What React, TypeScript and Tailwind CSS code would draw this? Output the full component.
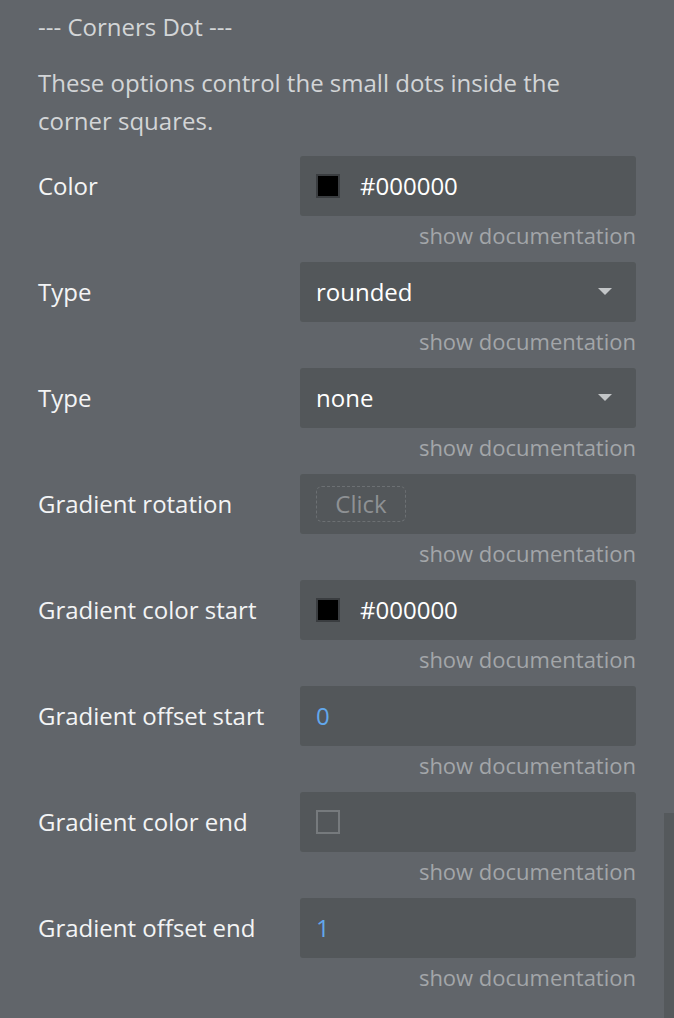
import React from "react";

type Field =
  | { kind: "color"; label: string; value: string }
  | { kind: "select"; label: string; value: string }
  | { kind: "click"; label: string }
  | { kind: "number"; label: string; value: string }
  | { kind: "empty-color"; label: string };

const fields: Field[] = [
  { kind: "color", label: "Color", value: "#000000" },
  { kind: "select", label: "Type", value: "rounded" },
  { kind: "select", label: "Type", value: "none" },
  { kind: "click", label: "Gradient rotation" },
  { kind: "color", label: "Gradient color start", value: "#000000" },
  { kind: "number", label: "Gradient offset start", value: "0" },
  { kind: "empty-color", label: "Gradient color end" },
  { kind: "number", label: "Gradient offset end", value: "1" },
];

function Control({ field }: { field: Field }) {
  switch (field.kind) {
    case "color":
      return (
        <div className="flex items-center h-full pl-4">
          <span className="w-6 h-6 bg-black border-2 border-[#3a3d40]" />
          <span className="ml-5 text-white">{field.value}</span>
        </div>
      );
    case "empty-color":
      return (
        <div className="flex items-center h-full pl-4">
          <span className="w-6 h-6 border-2 border-[#767a7d]" />
        </div>
      );
    case "select":
      return (
        <div className="flex items-center justify-between h-full pl-4 pr-[24px]">
          <span className="text-white">{field.value}</span>
          <svg width="14" height="8" viewBox="0 0 14 8">
            <path d="M0 0 L14 0 L7 7 Z" fill="#c3c6c8" />
          </svg>
        </div>
      );
    case "click":
      return (
        <div className="flex items-center h-full pl-4">
          <span className="flex items-center justify-center w-[90px] h-9 rounded-md border border-dashed border-[#6c7073] text-[#8e9194]">
            Click
          </span>
        </div>
      );
    case "number":
      return (
        <div className="flex items-center h-full pl-4">
          <span className="text-[#62a8ec]">{field.value}</span>
        </div>
      );
  }
}

export default function App() {
  return (
    <div
      className="relative w-[674px] h-[1018px] overflow-hidden bg-[#61656a] text-[24px]"
      style={{ fontFamily: '"Open Sans", sans-serif' }}
    >
      <div className="pl-[38px] pr-[38px] pt-[12px]">
        <div className="leading-[30px] text-[#d3d5d7]">--- Corners Dot ---</div>
        <p className="mt-[22px] leading-[38px] text-[#d3d5d7] w-[560px]">
          These options control the small dots inside the corner squares.
        </p>
        <div className="mt-[16px] flex flex-col">
          {fields.map((f, i) => (
            <div key={i} className="flex flex-col h-[106px]">
              <div className="flex h-[60px]">
                <div className="w-[262px] flex items-center text-[#f3f4f5]">{f.label}</div>
                <div className="w-[336px] h-[60px] rounded-[3px] bg-[#53575a]">
                  <Control field={f} />
                </div>
              </div>
              <div className="w-[598px] text-right text-[22px] leading-[38px] text-[#a3a6a9]">
                show documentation
              </div>
            </div>
          ))}
        </div>
      </div>
      <div className="absolute right-0 top-[813px] bottom-0 w-[10px] bg-[#55595c]" />
    </div>
  );
}
